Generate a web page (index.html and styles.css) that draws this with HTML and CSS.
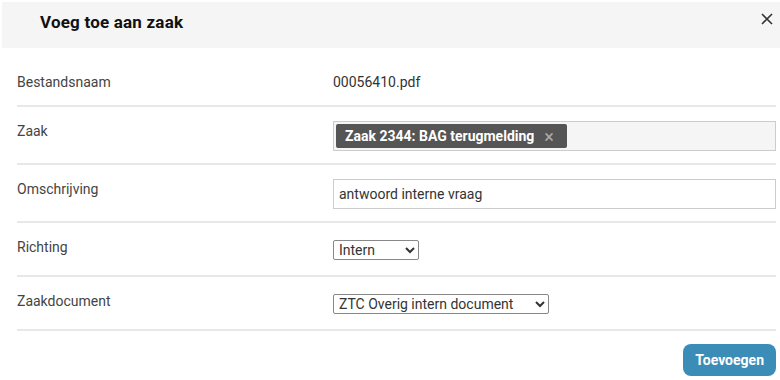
FILE: index.html
```html
<!DOCTYPE html>
<html lang="nl">
<head>
    <meta charset="UTF-8">
    <meta name="viewport" content="width=device-width, initial-scale=1.0">
    <title>Voeg toe aan zaak</title>
    <link rel="stylesheet" href="styles.css">
</head>
<body>
    <div class="modal">
        <!-- Header -->
        <div class="modal-header">
            <h1>Voeg toe aan zaak</h1>
            <button class="close-button" aria-label="Sluiten">
                <svg width="12" height="12" viewBox="0 0 12 12"><path d="M1 1L11 11M11 1L1 11" stroke="#333" stroke-width="1.6" fill="none"/></svg>
            </button>
        </div>

        <!-- Form -->
        <div class="modal-body">
            <div class="form-row first-row">
                <div class="form-label">Bestandsnaam</div>
                <div class="form-value">00056410.pdf</div>
            </div>
            <div class="form-row">
                <div class="form-label">Zaak</div>
                <div class="tag-box">
                    <span class="tag">Zaak 2344: BAG terugmelding <span class="tag-remove">&times;</span></span>
                </div>
            </div>
            <div class="form-row">
                <div class="form-label">Omschrijving</div>
                <input type="text" class="text-input" value="antwoord interne vraag">
            </div>
            <div class="form-row">
                <div class="form-label">Richting</div>
                <select class="select select-small">
                    <option>Intern</option>
                    <option>Inkomend</option>
                    <option>Uitgaand</option>
                </select>
            </div>
            <div class="form-row">
                <div class="form-label">Zaakdocument</div>
                <select class="select select-wide">
                    <option>ZTC Overig intern document</option>
                </select>
            </div>
        </div>

        <div class="modal-footer">
            <button class="add-button">Toevoegen</button>
        </div>
    </div>
</body>
</html>
```

FILE: styles.css
```css
body {
    margin: 0;
    font-family: Roboto, "Liberation Sans", Arial, sans-serif;
    background-color: #fff;
    color: #444;
}
.modal {
    padding-top: 2px;
    padding-left: 2px;
}
.modal-header {
    display: flex;
    align-items: center;
    justify-content: space-between;
    height: 46px;
    background-color: #f5f5f5;
    padding: 0 5px 0 38px;
}
.modal-header h1 {
    margin: 0;
    font-size: 17px;
    font-weight: bold;
    letter-spacing: 0.2px;
    color: #111;
    position: relative;
    top: -3px;
}
.close-button {
    border: none;
    background: none;
    padding: 2px;
    cursor: pointer;
    display: flex;
    position: relative;
    top: -6px;
}
.modal-body {
    padding: 10px 4px 0 15px;
}
.form-row {
    display: flex;
    align-items: flex-start;
    padding: 14px 0 12px;
    border-bottom: 2px solid #e8e8e8;
}
.first-row {
    padding-bottom: 13px;
}
.form-label {
    width: 316px;
    flex-shrink: 0;
    font-size: 14px;
    line-height: 20px;
    color: #444;
}
.form-value {
    font-size: 14px;
    line-height: 20px;
    color: #333;
}
.tag-box {
    flex: 1;
    height: 28px;
    border: 1px solid #ccc;
    background-color: #f5f5f5;
    display: flex;
    align-items: center;
    padding-left: 2px;
}
.tag {
    display: inline-flex;
    align-items: center;
    height: 24px;
    background-color: #555;
    color: #fff;
    font-size: 14px;
    font-weight: bold;
    padding: 0 13px 0 9px;
    border-radius: 2px;
}
.tag-remove {
    color: #aaa;
    font-weight: normal;
    font-size: 18px;
    margin-left: 10px;
}
.text-input {
    flex: 1;
    height: 30px;
    box-sizing: border-box;
    border: 1px solid #ccc;
    font-family: inherit;
    font-size: 14px;
    color: #333;
    padding: 0 5px;
    margin: 0;
    outline: none;
}
.select {
    height: 20px;
    margin: 3px 0;
    font-family: inherit;
    font-size: 14px;
    color: #333;
    padding: 0 1px;
    border: 1px solid #888;
    border-radius: 2px;
    background-color: #fff;
}
.select-small {
    width: 86px;
}
.select-wide {
    width: 216px;
}
.modal-footer {
    display: flex;
    justify-content: flex-end;
    padding: 13px 4px 0 0;
}
.add-button {
    height: 32px;
    padding: 0 12px;
    border: none;
    border-radius: 8px;
    background-color: #3b8db7;
    color: #fff;
    font-family: inherit;
    font-size: 14px;
    font-weight: bold;
    cursor: pointer;
}
```
